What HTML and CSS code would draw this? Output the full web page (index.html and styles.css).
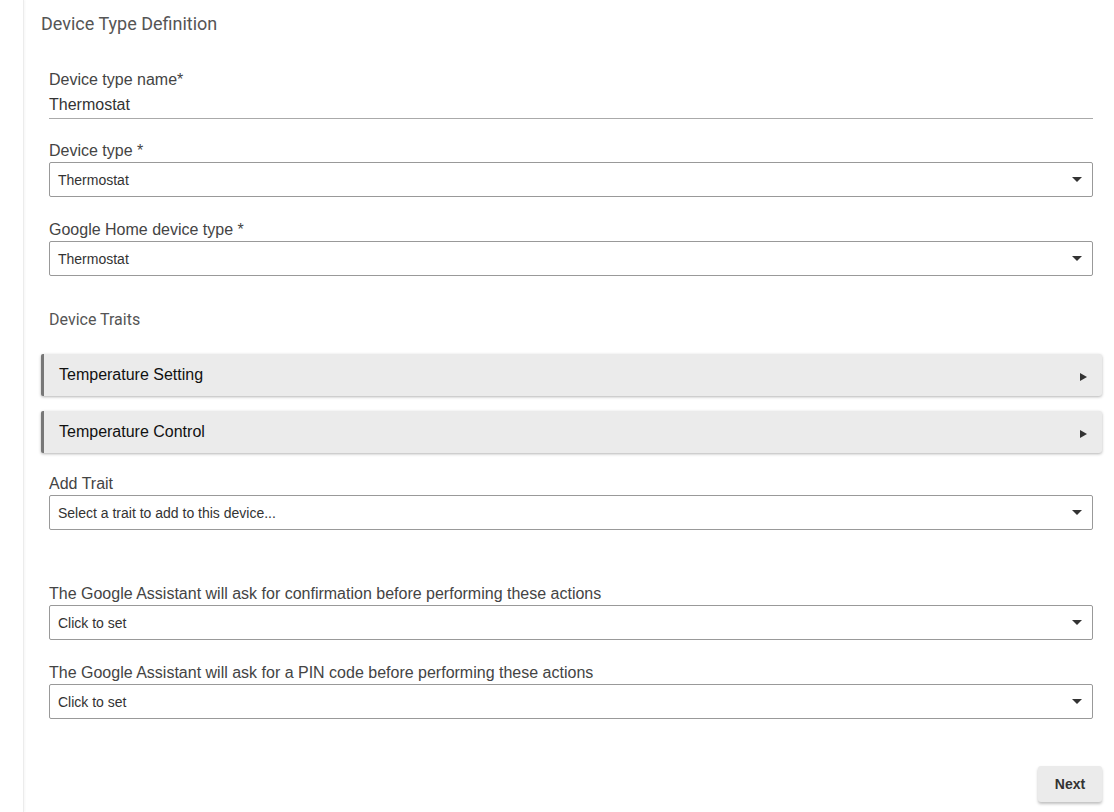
FILE: index.html
```html
<!DOCTYPE html>
<html lang="en">
<head>
    <meta charset="UTF-8">
    <meta name="viewport" content="width=device-width, initial-scale=1.0">
    <title>Device Type Definition</title>
    <link rel="stylesheet" href="styles.css">
</head>
<body>
    <div class="side"></div>

    <main class="page">
        <h1 class="title">Device Type Definition</h1>

        <div class="fields">
            <div class="field text-field">
                <label>Device type name*</label>
                <div class="text-input">Thermostat</div>
            </div>

            <div class="field">
                <label>Device type *</label>
                <div class="select"><span>Thermostat</span><i class="caret"></i></div>
            </div>

            <div class="field">
                <label>Google Home device type *</label>
                <div class="select"><span>Thermostat</span><i class="caret"></i></div>
            </div>

            <div class="traits-title">Device Traits</div>
        </div>

        <!-- список трейтов -->
        <div class="panels">
            <div class="panel">
                <span>Temperature Setting</span>
                <i class="arrow"></i>
            </div>
            <div class="panel">
                <span>Temperature Control</span>
                <i class="arrow"></i>
            </div>
        </div>

        <div class="fields">
            <div class="field add-trait">
                <label>Add Trait</label>
                <div class="select"><span>Select a trait to add to this device...</span><i class="caret"></i></div>
            </div>

            <div class="field">
                <label>The Google Assistant will ask for confirmation before performing these actions</label>
                <div class="select"><span>Click to set</span><i class="caret"></i></div>
            </div>

            <div class="field">
                <label>The Google Assistant will ask for a PIN code before performing these actions</label>
                <div class="select"><span>Click to set</span><i class="caret"></i></div>
            </div>
        </div>

        <div class="actions">
            <button class="next-btn">Next</button>
        </div>
    </main>
</body>
</html>
```

FILE: styles.css
```css
body {
    margin: 0;
    font-family: "Liberation Sans", Arial, sans-serif;
    background-color: #fff;
    display: flex;
    min-height: 100vh;
}

/* узкая полоса слева */
.side {
    width: 23px;
    flex-shrink: 0;
    border-right: 1px solid #ececec;
    box-shadow: 1px 0 2px rgba(0, 0, 0, 0.04);
}

.page {
    flex: 1;
    padding: 0 12px 0 17px;
}

.title {
    font-family: Roboto, "Liberation Sans", sans-serif;
    font-weight: 400;
    font-size: 18px;
    line-height: 24px;
    color: #555;
    margin: 12px 0 34px 0;
}

.fields {
    padding: 0 9px 0 8px;
}

.field {
    margin-bottom: 23px;
}

.field label {
    display: block;
    font-size: 16px;
    line-height: 20px;
    color: #444;
    margin-bottom: 1px;
}

.text-field {
    margin-bottom: 22px;
}

.text-field label {
    margin-bottom: 0;
}

.text-input {
    font-size: 16px;
    line-height: 20px;
    color: #333;
    padding: 5px 0 3px 0;
    border-bottom: 1px solid #aaa;
}

.select {
    height: 33px;
    border: 1px solid #999;
    border-radius: 2px;
    display: flex;
    align-items: center;
    justify-content: space-between;
    padding: 0 10px 0 8px;
    font-size: 14px;
    color: #333;
}

/* треугольник выпадающего списка */
.caret {
    width: 0;
    height: 0;
    border-left: 5px solid transparent;
    border-right: 5px solid transparent;
    border-top: 5px solid #333;
}

.traits-title {
    font-family: Roboto, "Liberation Sans", sans-serif;
    font-size: 16px;
    line-height: 20px;
    color: #555;
    padding-top: 11px;
    margin-bottom: 24px;
}

.panels {
    display: flex;
    flex-direction: column;
    gap: 15px;
    margin-bottom: 21px;
}

.panel {
    height: 42px;
    background-color: #ebebeb;
    border-left: 3px solid #777;
    border-radius: 2px 3px 3px 2px;
    box-shadow: 0 1px 3px rgba(0, 0, 0, 0.3);
    display: flex;
    align-items: center;
    justify-content: space-between;
    padding: 0 15px 0 15px;
    font-size: 16px;
    color: #111;
}

.arrow {
    width: 0;
    height: 0;
    border-top: 4px solid transparent;
    border-bottom: 4px solid transparent;
    border-left: 7px solid #333;
    margin-top: 4px;
}

.add-trait {
    margin-bottom: 54px;
}

.actions {
    display: flex;
    justify-content: flex-end;
    padding-top: 24px;
}

.next-btn {
    width: 64px;
    height: 36px;
    font-family: "Liberation Sans", Arial, sans-serif;
    font-size: 14px;
    font-weight: 600;
    color: #333;
    background-color: #ebebeb;
    border: none;
    border-radius: 3px;
    box-shadow: 0 2px 3px rgba(0, 0, 0, 0.25);
    cursor: pointer;
}
```
